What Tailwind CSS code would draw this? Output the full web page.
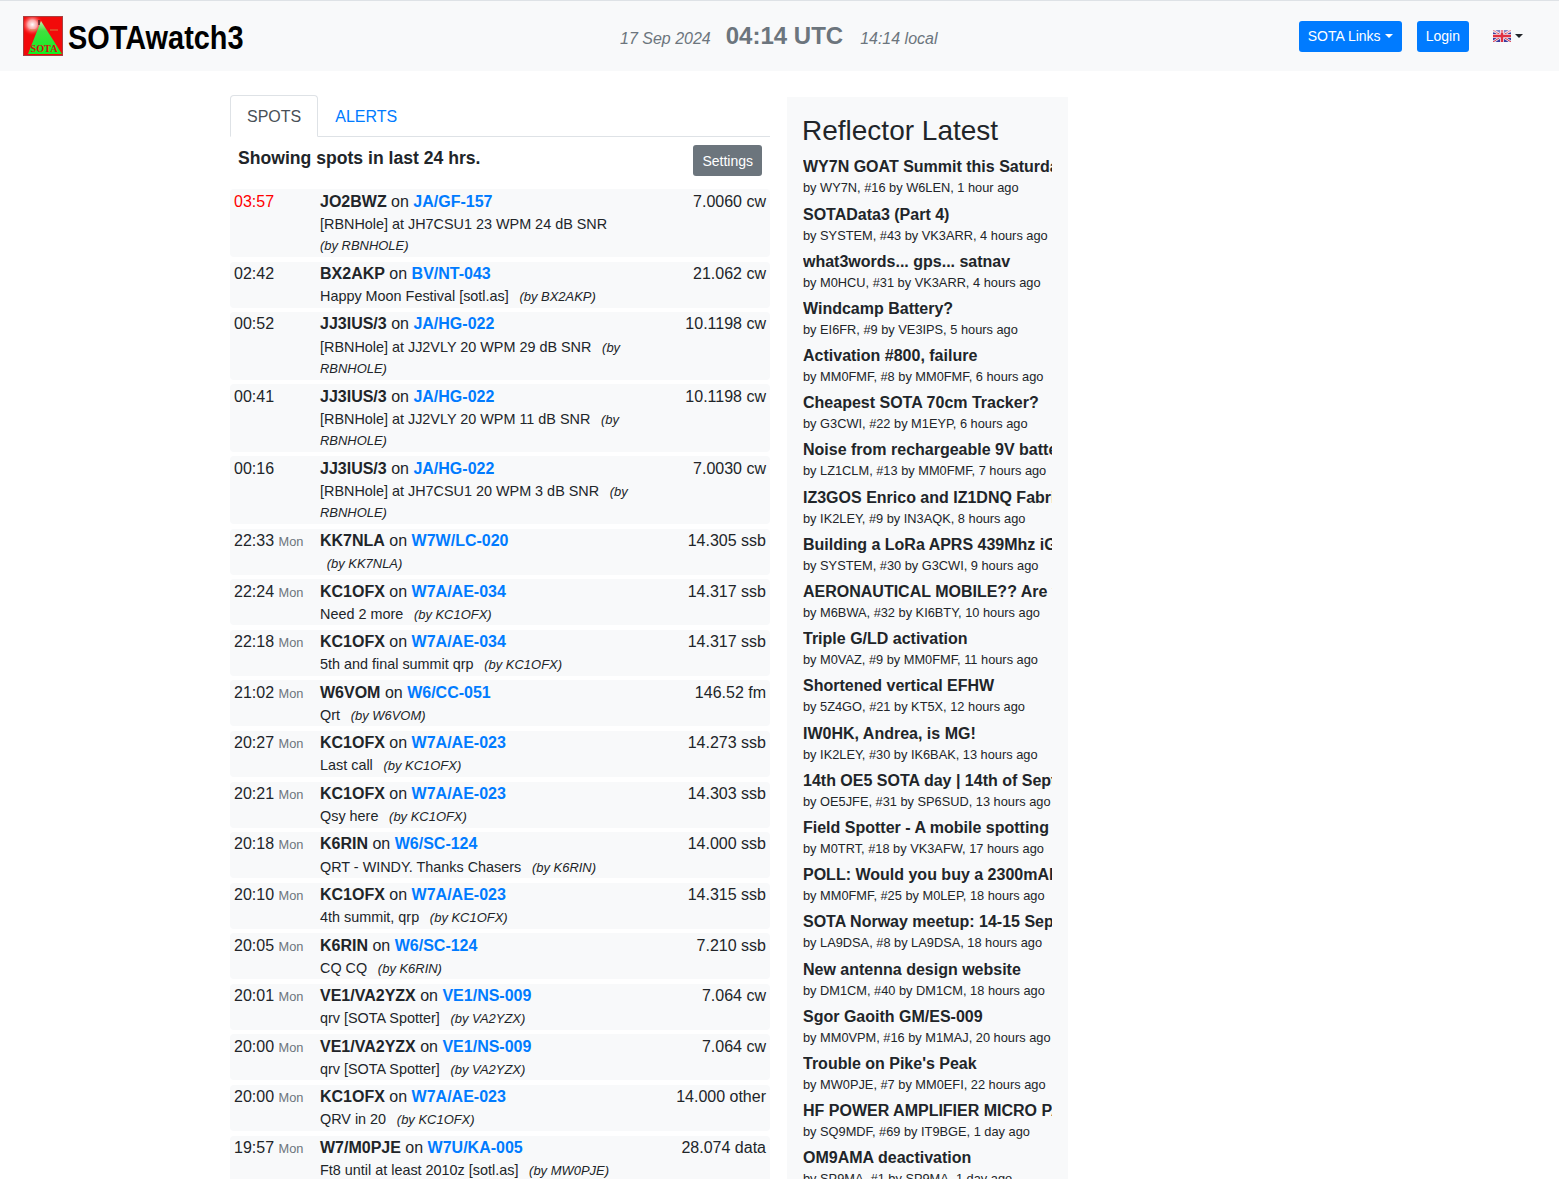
<!DOCTYPE html>
<html lang="en">
<head>
    <meta charset="UTF-8">
    <meta name="viewport" content="width=device-width, initial-scale=1.0">
    <title>SOTAwatch3</title>
    <script src="https://cdn.jsdelivr.net/npm/@tailwindcss/browser@4"></script>
</head>
<body class="h-screen overflow-hidden bg-white font-['Liberation_Sans',sans-serif] text-[16px] leading-6 text-[#212529]">
    <!-- top bar -->
    <nav class="h-[71px] border-t border-[#dee2e6] bg-[#f8f9fa] flex items-center relative">
        <div class="flex items-center ml-[23px] w-[300px]">
            <svg width="40" height="40" viewBox="0 0 40 40" class="shrink-0">
                <defs>
                    <radialGradient id="glow" cx="0.22" cy="0.2" r="0.3">
                        <stop offset="0" stop-color="#ffffff"/>
                        <stop offset="0.4" stop-color="#ffd0d0" stop-opacity="0.8"/>
                        <stop offset="1" stop-color="#ff0000" stop-opacity="0"/>
                    </radialGradient>
                    <linearGradient id="peak" x1="0" y1="0" x2="0" y2="1">
                        <stop offset="0" stop-color="#c8f0b0"/>
                        <stop offset="0.3" stop-color="#40e040"/>
                        <stop offset="1" stop-color="#10f020"/>
                    </linearGradient>
                </defs>
                <rect width="40" height="40" fill="#f20a0a"/>
                <rect x="0.5" y="0.5" width="39" height="39" fill="none" stroke="#a84040"/>
                <rect x="1" y="1" width="38" height="38" fill="url(#glow)"/>
                <path d="M7 14H13M27 14H35" stroke="#d08040" stroke-width="1"/>
                <polygon points="18,5 39,38 5,38" fill="url(#peak)"/>
                <path d="M16 4V9" stroke="#222222" stroke-width="1.2"/>
                <text x="21" y="36" text-anchor="middle" font-family="Liberation Serif" font-weight="bold" font-size="9.5" textLength="27" lengthAdjust="spacingAndGlyphs" fill="#d01010">SOTA</text>
            </svg>
            <span class="ml-[5px] mt-[1px] font-bold text-[34px] leading-none text-black origin-left scale-x-[0.85] whitespace-nowrap">SOTAwatch3</span>
        </div>
        <div class="absolute left-[620px] top-[17px] flex items-baseline text-[#6c757d] whitespace-nowrap">
            <em>17 Sep 2024</em>
            <strong class="text-[24px] leading-9 ml-[15px]">04:14 UTC</strong>
            <em class="ml-[17px]">14:14 local</em>
        </div>
        <div class="ml-auto flex items-center text-[14px] leading-[21px] text-white">
            <span class="h-[31px] w-[103px] pl-[9px] py-[5px] bg-[#007bff] rounded-[3px] flex items-center whitespace-nowrap">SOTA Links<i class="ml-[4px] border-x-[4px] border-t-[4px] border-x-transparent border-t-white"></i></span>
            <span class="h-[31px] ml-[15px] px-[9px] py-[5px] bg-[#007bff] rounded-[3px]">Login</span>
            <span class="ml-[24px] mr-[36px] flex items-center">
                <svg width="18" height="12" viewBox="0 0 18 12">
                    <rect width="18" height="12" fill="#3b3b9e"/>
                    <path d="M0 0L18 12M18 0L0 12" stroke="#e8e8f5" stroke-width="2.6"/>
                    <path d="M0 0L18 12M18 0L0 12" stroke="#e03040" stroke-width="1"/>
                    <path d="M9 0V12M0 6H18" stroke="#e8e8f5" stroke-width="4"/>
                    <path d="M9 0V12M0 6H18" stroke="#e03040" stroke-width="2.4"/>
                    <rect width="18" height="3" fill="#ffffff" fill-opacity="0.4"/>
                </svg>
                <i class="ml-[4px] border-x-[4px] border-t-[4px] border-x-transparent border-t-[#212529]"></i>
            </span>
        </div>
    </nav>

    <main class="flex items-start pl-[230px] pt-[24px]">
        <section class="w-[540px] shrink-0">
            <div class="flex h-[42px] border-b border-[#dee2e6]">
                <span class="h-[42px] px-4 pt-[9px] border border-[#dee2e6] border-b-white rounded-t-[4px] bg-white text-[#495057]">SPOTS</span>
                <span class="pl-[17px] pr-4 pt-[10px] text-[#007bff]">ALERTS</span>
            </div>
            <div class="flex justify-between pl-2 pr-2 pt-2 h-[52.4px]">
                <strong class="text-[17.6px] leading-[26px]">Showing spots in last 24 hrs.</strong>
                <span class="h-[31px] px-[9px] pt-[6px] bg-[#6c757d] text-white text-[14px] leading-[21px] rounded-[3px]">Settings</span>
            </div>
            <div id="spots"></div>
        </section>
        <aside class="w-[281px] ml-[17px] mt-[2px] h-[1200px] bg-[#f8f9fa] pl-[15px] pr-4 pt-[17px]">
            <h3 class="text-[28px] leading-[34px] font-normal">Reflector Latest</h3>
            <div id="topics" class="mt-[7.33px] ml-px w-[249px] overflow-hidden"></div>
        </aside>
    </main>

    <script>
        const spots = [
            ["03:57", "", "JO2BWZ", "JA/GF-157", "7.0060 cw", "[RBNHole] at JH7CSU1 23 WPM 24 dB SNR", "RBNHOLE"],
            ["02:42", "", "BX2AKP", "BV/NT-043", "21.062 cw", "Happy Moon Festival [sotl.as]", "BX2AKP"],
            ["00:52", "", "JJ3IUS/3", "JA/HG-022", "10.1198 cw", "[RBNHole] at JJ2VLY 20 WPM 29 dB SNR", "RBNHOLE"],
            ["00:41", "", "JJ3IUS/3", "JA/HG-022", "10.1198 cw", "[RBNHole] at JJ2VLY 20 WPM 11 dB SNR", "RBNHOLE"],
            ["00:16", "", "JJ3IUS/3", "JA/HG-022", "7.0030 cw", "[RBNHole] at JH7CSU1 20 WPM 3 dB SNR", "RBNHOLE"],
            ["22:33", "Mon", "KK7NLA", "W7W/LC-020", "14.305 ssb", "", "KK7NLA"],
            ["22:24", "Mon", "KC1OFX", "W7A/AE-034", "14.317 ssb", "Need 2 more", "KC1OFX"],
            ["22:18", "Mon", "KC1OFX", "W7A/AE-034", "14.317 ssb", "5th and final summit qrp", "KC1OFX"],
            ["21:02", "Mon", "W6VOM", "W6/CC-051", "146.52 fm", "Qrt", "W6VOM"],
            ["20:27", "Mon", "KC1OFX", "W7A/AE-023", "14.273 ssb", "Last call", "KC1OFX"],
            ["20:21", "Mon", "KC1OFX", "W7A/AE-023", "14.303 ssb", "Qsy here", "KC1OFX"],
            ["20:18", "Mon", "K6RIN", "W6/SC-124", "14.000 ssb", "QRT - WINDY. Thanks Chasers", "K6RIN"],
            ["20:10", "Mon", "KC1OFX", "W7A/AE-023", "14.315 ssb", "4th summit, qrp", "KC1OFX"],
            ["20:05", "Mon", "K6RIN", "W6/SC-124", "7.210 ssb", "CQ CQ", "K6RIN"],
            ["20:01", "Mon", "VE1/VA2YZX", "VE1/NS-009", "7.064 cw", "qrv [SOTA Spotter]", "VA2YZX"],
            ["20:00", "Mon", "VE1/VA2YZX", "VE1/NS-009", "7.064 cw", "qrv [SOTA Spotter]", "VA2YZX"],
            ["20:00", "Mon", "KC1OFX", "W7A/AE-023", "14.000 other", "QRV in 20", "KC1OFX"],
            ["19:57", "Mon", "W7/M0PJE", "W7U/KA-005", "28.074 data", "Ft8 until at least 2010z [sotl.as]", "MW0PJE"],
        ];
        const topics = [
            ["WY7N GOAT Summit this Saturday", "by WY7N, #16 by W6LEN, 1 hour ago"],
            ["SOTAData3 (Part 4)", "by SYSTEM, #43 by VK3ARR, 4 hours ago"],
            ["what3words... gps... satnav", "by M0HCU, #31 by VK3ARR, 4 hours ago"],
            ["Windcamp Battery?", "by EI6FR, #9 by VE3IPS, 5 hours ago"],
            ["Activation #800, failure", "by MM0FMF, #8 by MM0FMF, 6 hours ago"],
            ["Cheapest SOTA 70cm Tracker?", "by G3CWI, #22 by M1EYP, 6 hours ago"],
            ["Noise from rechargeable 9V batteries", "by LZ1CLM, #13 by MM0FMF, 7 hours ago"],
            ["IZ3GOS Enrico and IZ1DNQ Fabrizio", "by IK2LEY, #9 by IN3AQK, 8 hours ago"],
            ["Building a LoRa APRS 439Mhz iGate", "by SYSTEM, #30 by G3CWI, 9 hours ago"],
            ["AERONAUTICAL MOBILE?? Are you", "by M6BWA, #32 by KI6BTY, 10 hours ago"],
            ["Triple G/LD activation", "by M0VAZ, #9 by MM0FMF, 11 hours ago"],
            ["Shortened vertical EFHW", "by 5Z4GO, #21 by KT5X, 12 hours ago"],
            ["IW0HK, Andrea, is MG!", "by IK2LEY, #30 by IK6BAK, 13 hours ago"],
            ["14th OE5 SOTA day | 14th of September", "by OE5JFE, #31 by SP6SUD, 13 hours ago"],
            ["Field Spotter - A mobile spotting app", "by M0TRT, #18 by VK3AFW, 17 hours ago"],
            ["POLL: Would you buy a 2300mAh", "by MM0FMF, #25 by M0LEP, 18 hours ago"],
            ["SOTA Norway meetup: 14-15 September", "by LA9DSA, #8 by LA9DSA, 18 hours ago"],
            ["New antenna design website", "by DM1CM, #40 by DM1CM, 18 hours ago"],
            ["Sgor Gaoith GM/ES-009", "by MM0VPM, #16 by M1MAJ, 20 hours ago"],
            ["Trouble on Pike's Peak", "by MW0PJE, #7 by MM0EFI, 22 hours ago"],
            ["HF POWER AMPLIFIER MICRO PA", "by SQ9MDF, #69 by IT9BGE, 1 day ago"],
            ["OM9AMA deactivation", "by SP9MA, #1 by SP9MA, 1 day ago"],
        ];

        document.getElementById("spots").innerHTML = spots.map(([time, day, call, summit, freq, comment, by], i) => `
            <div class="flex bg-[#f8f9fa] rounded-[4px] mb-[4.6px] pt-[0.3px] px-1">
                <div class="w-[86px] shrink-0 ${i === 0 ? "text-[#ff0000]" : ""}">${time} <small class="text-[12.8px] text-[#6c757d]">${day}</small></div>
                <div class="w-[312px] shrink-0">
                    <div><strong>${call}</strong> on <strong class="text-[#007bff]">${summit}</strong></div>
                    <div class="pt-[0.1px] text-[14.4px] leading-[21.6px]">${comment} <em class="ml-[-0.5px] text-[12.96px]">&nbsp; (by ${by})</em></div>
                </div>
                <div class="ml-auto whitespace-nowrap">${freq}</div>
            </div>`).join("");

        document.getElementById("topics").innerHTML = topics.map(([title, meta]) => `
            <div class="h-[47.2px] whitespace-nowrap">
                <div class="font-bold leading-6">${title}</div>
                <div class="text-[12.8px] leading-[18.75px]">${meta}</div>
            </div>`).join("");
    </script>
</body>
</html>
